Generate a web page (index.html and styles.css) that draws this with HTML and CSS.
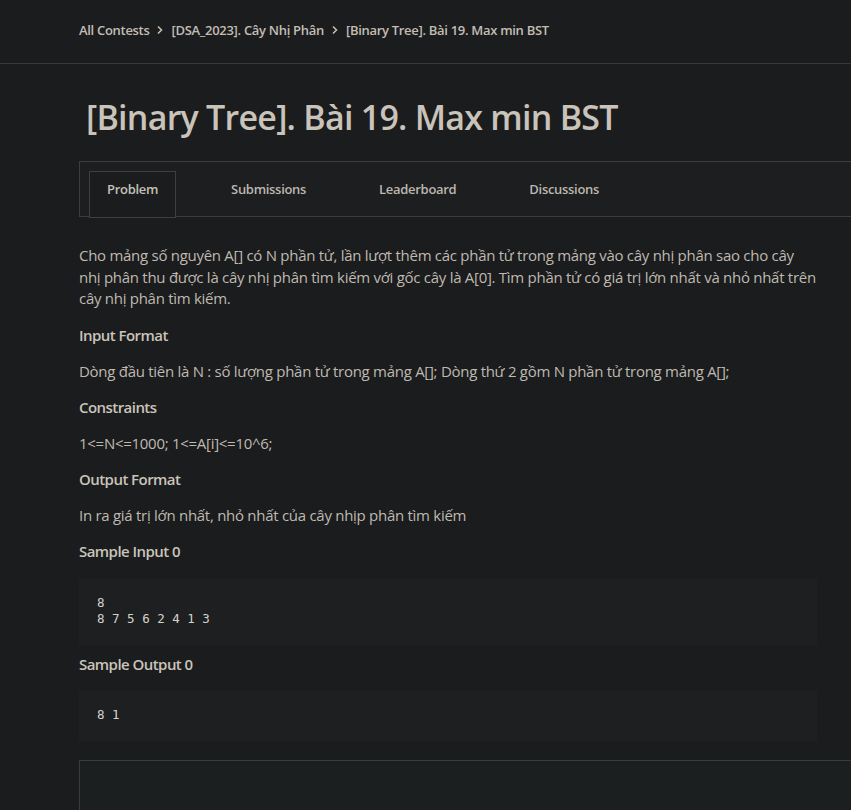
FILE: index.html
```html
<!DOCTYPE html>
<html lang="vi">
<head>
<meta charset="utf-8">
<title>[Binary Tree]. Bài 19. Max min BST</title>
<link rel="stylesheet" href="styles.css">
</head>
<body>
<header class="crumbs">
  <a class="crumb">All Contests</a>
  <svg class="sep" width="8" height="10" viewBox="0 0 8 10"><path d="M2 1.5 L5.5 5 L2 8.5" fill="none" stroke="currentColor" stroke-width="1.6"/></svg>
  <a class="crumb">[DSA_2023]. Cây Nhị Phân</a>
  <svg class="sep" width="8" height="10" viewBox="0 0 8 10"><path d="M2 1.5 L5.5 5 L2 8.5" fill="none" stroke="currentColor" stroke-width="1.6"/></svg>
  <span class="crumb">[Binary Tree]. Bài 19. Max min BST</span>
</header>
<main class="page">
  <h1 class="title">[Binary Tree]. Bài 19. Max min BST</h1>
  <nav class="tabs">
    <a class="tab active">Problem</a>
    <a class="tab">Submissions</a>
    <a class="tab">Leaderboard</a>
    <a class="tab">Discussions</a>
  </nav>
  <section class="problem">
    <p class="text">Cho mảng số nguyên A[] có N phần tử, lần lượt thêm các phần tử trong mảng vào cây nhị phân sao cho cây nhị phân thu được là cây nhị phân tìm kiếm với gốc cây là A[0]. Tìm phần tử có giá trị lớn nhất và nhỏ nhất trên cây nhị phân tìm kiếm.</p>
    <h3 class="head">Input Format</h3>
    <p class="text">Dòng đầu tiên là N : số lượng phần tử trong mảng A[]; Dòng thứ 2 gồm N phần tử trong mảng A[];</p>
    <h3 class="head">Constraints</h3>
    <p class="text">1&lt;=N&lt;=1000; 1&lt;=A[i]&lt;=10^6;</p>
    <h3 class="head">Output Format</h3>
    <p class="text">In ra giá trị lớn nhất, nhỏ nhất của cây nhịp phân tìm kiếm</p>
    <h3 class="head in">Sample Input 0</h3>
    <pre class="code">8
8 7 5 6 2 4 1 3</pre>
    <h3 class="head out">Sample Output 0</h3>
    <pre class="code short">8 1</pre>
  </section>
  <div class="editor"></div>
</main>
</body>
</html>
```
FILE: styles.css
```css
html, body {
  margin: 0;
  padding: 0;
  background: #1b1c1e;
  overflow: hidden;
}
body {
  font-family: "Open Sans", "Noto Sans", sans-serif;
  color: #bfb9b0;
}
.crumbs {
  height: 59px;
  padding-bottom: 4px;
  border-bottom: 1px solid #37393b;
  display: flex;
  align-items: center;
  gap: 7px;
  padding-left: 79px;
  font-size: 13px;
  font-weight: 600;
  letter-spacing: -0.3px;
  color: #c3bdb4;
}
.crumb { color: inherit; text-decoration: none; }
.sep { color: #c3bdb4; }
.page {
  padding-left: 79px;
}
.title {
  margin: 30px 0 0 7px;
  font-size: 34px;
  line-height: 46px;
  font-weight: 600;
  letter-spacing: -0.75px;
  color: #c9c3ba;
}
.tabs {
  margin-top: 21px;
  width: 820px;
  height: 54px;
  border: 1px solid #3b3d3f;
  background: #1c1e20;
  display: flex;
  align-items: flex-start;
  gap: 37px;
  padding-left: 9px;
}
.tab {
  margin-top: 9px;
  padding: 8px 17px 0;
  box-sizing: border-box;
  height: 47px;
  border: 1px solid transparent;
  font-size: 13px;
  line-height: 18px;
  font-weight: 600;
  letter-spacing: -0.3px;
  color: #bdb7ae;
}
.tab.active {
  border-color: #3d3f41;
  background: #1b1c1e;
  color: #c6c0b7;
}
.problem {
  width: 738px;
  padding-top: 28px;
}
.text {
  margin: 0 0 14.5px;
  font-size: 15px;
  line-height: 21.5px;
  letter-spacing: -0.28px;
}
.problem > .text:first-child { margin-bottom: 15.5px; }
.head {
  margin: 0 0 14.5px;
  font-size: 15px;
  line-height: 21.5px;
  font-weight: 600;
  letter-spacing: -0.55px;
  color: #cac4bb;
}
.head.in { margin-bottom: 15.5px; }
.head.out { margin-top: 8px; margin-bottom: 14px; }
.code {
  margin: 0;
  background: #1e1f21;
  padding: 17px 18px 19px;
  font-family: "DejaVu Sans Mono", monospace;
  font-size: 12.5px;
  line-height: 16px;
  color: #d6d2cc;
}
.code.short { padding-bottom: 18px; }
.editor {
  margin-top: 19px;
  width: 820px;
  height: 120px;
  border: 1px solid #3a3c3e;
  background: #1c1f20;
}
```
